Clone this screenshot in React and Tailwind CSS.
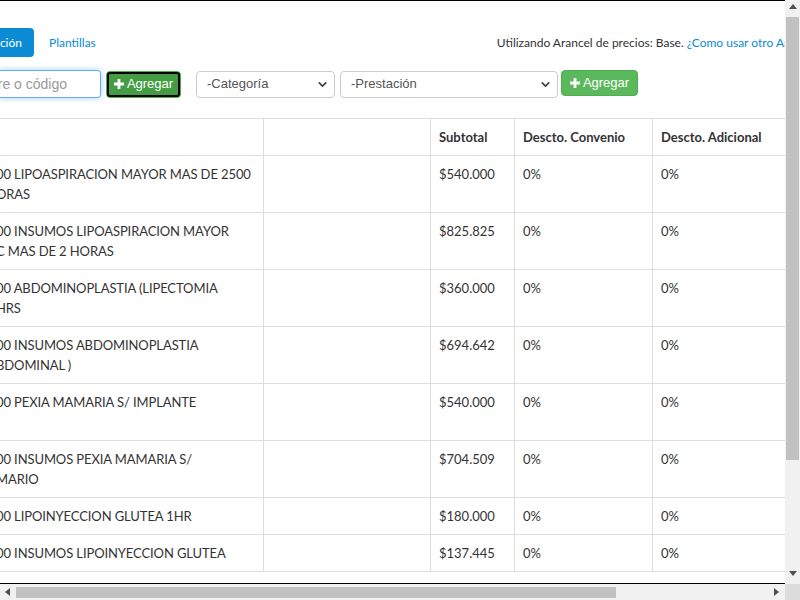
import { ChevronDown } from "lucide-react";

const rows = [
  { desc: ["00 LIPOASPIRACION MAYOR MAS DE 2500", "ORAS"], subtotal: "$540.000" },
  { desc: ["00 INSUMOS LIPOASPIRACION MAYOR", "C MAS DE 2 HORAS"], subtotal: "$825.825" },
  { desc: ["00 ABDOMINOPLASTIA (LIPECTOMIA", "HRS"], subtotal: "$360.000" },
  { desc: ["00 INSUMOS ABDOMINOPLASTIA", "BDOMINAL )"], subtotal: "$694.642" },
  { desc: ["00 PEXIA MAMARIA S/ IMPLANTE", "\u00a0"], subtotal: "$540.000" },
  { desc: ["00 INSUMOS PEXIA MAMARIA S/", "MARIO"], subtotal: "$704.509" },
  { desc: ["00 LIPOINYECCION GLUTEA 1HR"], subtotal: "$180.000" },
  { desc: ["00 INSUMOS LIPOINYECCION GLUTEA"], subtotal: "$137.445" },
];

const cols = "grid grid-cols-[263px_167px_84px_138px_220px]";

function Plus() {
  return (
    <svg width="10" height="10" viewBox="0 0 10 10" className="shrink-0">
      <path d="M3.6 0h2.8v3.6H10v2.8H6.4V10H3.6V6.4H0V3.6h3.6z" fill="white" />
    </svg>
  );
}

function Tri({ dir }) {
  const d = {
    up: "M0 6 L4 1 L8 6 Z",
    down: "M0 1 L8 1 L4 6 Z",
    left: "M6 0 L6 8 L1 4 Z",
    right: "M1 0 L1 8 L6 4 Z",
  }[dir];
  return (
    <svg width="8" height="8" viewBox="0 0 8 8">
      <path d={d} fill="#505050" />
    </svg>
  );
}

function Select({ label, width }) {
  return (
    <div className={`${width} h-[27px] border border-[#ccc] rounded-[4px] bg-white flex items-center justify-between pl-[10px] pr-[5px] text-[13px] text-[#555] font-['Liberation_Sans',Arial,sans-serif]`}>
      <span>{label}</span>
      <ChevronDown size={13} strokeWidth={3.2} color="#444" />
    </div>
  );
}

export default function App() {
  return (
    <div className="w-[800px] h-[600px] bg-white flex flex-col overflow-hidden font-['Lato',sans-serif] text-[#333]">
      <div className="flex h-[584px]">
        <div className="w-[785px] border-t border-b border-black overflow-hidden flex flex-col">
          <div className="flex items-center mt-[27px] h-[29px] whitespace-nowrap">
            <div className="w-[34px] h-[29px] bg-[#0a8bd3] rounded-r-[4px] overflow-hidden flex items-center justify-end pr-[12px] text-white text-[12px] shrink-0">
              <span className="shrink-0">Cotización</span>
            </div>
            <span className="ml-[15px] text-[12px] text-[#0a8bd3] shrink-0">Plantillas</span>
            <span className="ml-[401px] text-[12px] shrink-0">
              Utilizando Arancel de precios: Base.{" "}
              <span className="text-[#0a8bd3]">¿Como usar otro Arancel?</span>
            </span>
          </div>

          <div className="flex items-center mt-[13px] h-[28px] whitespace-nowrap">
            <div className="w-[101px] h-[28px] shrink-0 border border-l-0 border-[#66afe9] rounded-r-[4px] shadow-[0_0_6px_rgba(102,175,233,0.6)] overflow-hidden flex items-center justify-end pr-[33px] text-[14px] text-[#999] font-['Liberation_Sans',Arial,sans-serif]">
              <span className="shrink-0">Buscar por nombre o código</span>
            </div>
            <div className="ml-[5px] w-[75px] h-[27px] shrink-0 rounded-[4px] border border-[#4cae4c] bg-[#449d44] p-0">
              <div className="w-full h-full rounded-[3px] border-2 border-black flex items-center justify-center gap-[3px] text-white text-[13px] font-['Liberation_Sans',Arial,sans-serif]">
                <Plus />
                <span>Agregar</span>
              </div>
            </div>
            <div className="ml-[15px] shrink-0">
              <Select label="-Categoría" width="w-[139px]" />
            </div>
            <div className="ml-[5px] shrink-0">
              <Select label="-Prestación" width="w-[218px]" />
            </div>
            <div className="ml-[3px] w-[77px] h-[26px] shrink-0 rounded-[4px] border border-[#4cae4c] bg-[#5cb85c] flex items-center justify-center gap-[3px] text-white text-[13px] font-['Liberation_Sans',Arial,sans-serif] -translate-y-[1px]">
              <Plus />
              <span>Agregar</span>
            </div>
          </div>

          <div className="mt-[20px] border-t border-[#ddd] text-[13px] leading-[20px] whitespace-nowrap">
            <div className={`${cols} border-b border-[#ddd] font-bold`}>
              <div className="py-[8px]">&nbsp;</div>
              <div className="py-[8px] border-l border-[#ddd]"></div>
              <div className="py-[8px] px-[8px] border-l border-[#ddd]">Subtotal</div>
              <div className="py-[8px] px-[8px] border-l border-[#ddd]">Descto. Convenio</div>
              <div className="py-[8px] px-[8px] border-l border-[#ddd]">Descto. Adicional</div>
            </div>
            {rows.map((r, i) => (
              <div key={i} className={`${cols} border-b border-[#ddd]`}>
                <div className="py-[8px] overflow-hidden">
                  {r.desc.map((l, j) => (
                    <div key={j} className="-ml-[4px] tracking-[-0.1px]">{l}</div>
                  ))}
                </div>
                <div className="py-[8px] border-l border-[#ddd]"></div>
                <div className="py-[8px] px-[8px] border-l border-[#ddd]">{r.subtotal}</div>
                <div className="py-[8px] px-[8px] border-l border-[#ddd]">0%</div>
                <div className="py-[8px] px-[8px] border-l border-[#ddd]">0%</div>
              </div>
            ))}
          </div>
        </div>

        <div className="w-[15px] bg-[#f1f1f1] flex flex-col items-center">
          <div className="h-[14px] flex items-center justify-center">
            <Tri dir="up" />
          </div>
          <div className="mt-[3px] w-[13px] h-[443px] bg-[#c1c1c1]"></div>
          <div className="flex-1"></div>
          <div className="h-[16px] flex items-center justify-center mb-[2px]">
            <Tri dir="down" />
          </div>
        </div>
      </div>

      <div className="flex h-[16px]">
        <div className="w-[785px] bg-[#f1f1f1] flex items-center">
          <div className="w-[16px] flex items-center justify-center">
            <Tri dir="left" />
          </div>
          <div className="w-[600px] h-[11px] bg-[#c1c1c1]"></div>
          <div className="flex-1"></div>
          <div className="w-[16px] flex items-center justify-center">
            <Tri dir="right" />
          </div>
        </div>
        <div className="w-[15px] bg-[#dcdcdc]"></div>
      </div>
    </div>
  );
}
